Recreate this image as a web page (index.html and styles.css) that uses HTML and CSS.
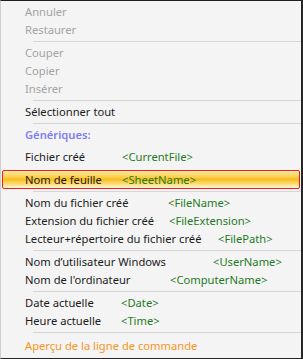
FILE: index.html
```html
<!DOCTYPE html>
<html lang="fr">
<head>
<meta charset="utf-8">
<link rel="stylesheet" href="styles.css">
</head>
<body>
<div class="menu">
  <div class="item disabled">Annuler</div>
  <div class="item disabled">Restaurer</div>
  <div class="sep"></div>
  <div class="item disabled">Couper</div>
  <div class="item disabled">Copier</div>
  <div class="item disabled">Insérer</div>
  <div class="sep"></div>
  <div class="item">Sélectionner tout</div>
  <div class="sep"></div>
  <div class="item header">Génériques:</div>
  <div class="item col-97"><span class="label">Fichier créé</span><span class="val">&lt;CurrentFile&gt;</span></div>
  <div class="item col-97 active"><span class="label">Nom de feuille</span><span class="val">&lt;SheetName&gt;</span></div>
  <div class="sep"></div>
  <div class="item col-143"><span class="label">Nom du fichier créé</span><span class="val">&lt;FileName&gt;</span></div>
  <div class="item col-144"><span class="label">Extension du fichier créé</span><span class="val">&lt;FileExtension&gt;</span></div>
  <div class="item col-193"><span class="label">Lecteur+répertoire du fichier créé</span><span class="val">&lt;FilePath&gt;</span></div>
  <div class="sep"></div>
  <div class="item col-188"><span class="label">Nom d’utilisateur Windows</span><span class="val">&lt;UserName&gt;</span></div>
  <div class="item col-145"><span class="label">Nom de l'ordinateur</span><span class="val">&lt;ComputerName&gt;</span></div>
  <div class="sep"></div>
  <div class="item col-96"><span class="label">Date actuelle</span><span class="val">&lt;Date&gt;</span></div>
  <div class="item col-96"><span class="label">Heure actuelle</span><span class="val">&lt;Time&gt;</span></div>
  <div class="sep"></div>
  <div class="item preview">Aperçu de la ligne de commande</div>
</div>
</body>
</html>
```
FILE: styles.css
```css
html, body {
  margin: 0;
  padding: 0;
  background: #f4f4f4;
}
.menu {
  box-sizing: border-box;
  width: 303px;
  height: 359px;
  background: #f4f4f4;
  border-top: 1px solid #1e1e1e;
  border-right: 2px solid #262626;
  border-bottom: 1px solid #262626;
  border-left: 1px solid #cfcfcf;
  padding-top: 2px;
  font-family: "Noto Sans", "Open Sans", sans-serif;
  font-size: 11.2px;
  color: #1b1b1b;
  display: flex;
  flex-direction: column;
}
.item {
  height: 18px;
  line-height: 18px;
  padding-left: 24px;
  white-space: nowrap;
  display: flex;
  align-items: center;
}
.disabled { color: #a3a3a3; }
.header {
  height: 22px;
  padding-bottom: 4px;
  box-sizing: border-box;
  color: #7f7ff5;
  font-weight: 600;
}
.sep {
  height: 1px;
  background: #d6d6d6;
  margin: 2px 0 2px 32px;
  flex: none;
}
.label { flex: none; }
.val { color: #1f7a1f; }
.col-96 .label { width: 96px; }
.col-97 .label { width: 97px; }
.col-143 .label { width: 143px; }
.col-144 .label { width: 144px; }
.col-145 .label { width: 145px; }
.col-188 .label { width: 188px; }
.col-193 .label { width: 193px; }
.active {
  height: 19px;
  margin: 4px 1px 0 1px;
  padding-left: 22px;
  box-sizing: border-box;
  border: 1px solid #ee1c25;
  border-radius: 2px;
  background: linear-gradient(#fde9a4 0%, #fcd55a 30%, #f8be20 50%, #fcd86a 72%, #fff6d6 100%);
}
.preview {
  height: 22px;
  color: #f7941d;
}
```
